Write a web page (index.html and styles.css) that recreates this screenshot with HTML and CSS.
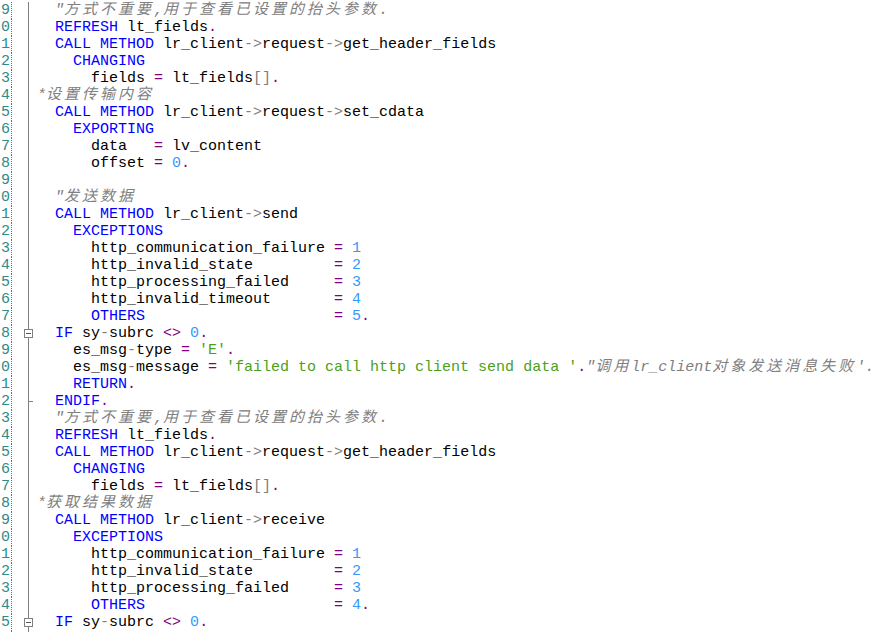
FILE: index.html
```html
<!DOCTYPE html>
<html>
<head>
<meta charset="utf-8">
<link rel="stylesheet" href="styles.css">
</head>
<body>
<div class="editor">
<div class="ln"><div class="no">9</div><div class="gut"></div><div class="code">  <span class="c">"<span class="z">方式不重要</span>,<span class="z">用于查看已设置的抬头参数</span>.</span></div></div>
<div class="ln"><div class="no">0</div><div class="gut"></div><div class="code">  <span class="k">REFRESH</span> lt_fields<span class="o">.</span></div></div>
<div class="ln"><div class="no">1</div><div class="gut"></div><div class="code">  <span class="k">CALL METHOD</span> lr_client<span class="g">-&gt;</span>request<span class="g">-&gt;</span>get_header_fields</div></div>
<div class="ln"><div class="no">2</div><div class="gut"></div><div class="code">    <span class="k">CHANGING</span></div></div>
<div class="ln"><div class="no">3</div><div class="gut"></div><div class="code">      fields <span class="o">=</span> lt_fields<span class="g">[]</span><span class="o">.</span></div></div>
<div class="ln"><div class="no">4</div><div class="gut"></div><div class="code"><span class="c">*<span class="z">设置传输内容</span></span></div></div>
<div class="ln"><div class="no">5</div><div class="gut"></div><div class="code">  <span class="k">CALL METHOD</span> lr_client<span class="g">-&gt;</span>request<span class="g">-&gt;</span>set_cdata</div></div>
<div class="ln"><div class="no">6</div><div class="gut"></div><div class="code">    <span class="k">EXPORTING</span></div></div>
<div class="ln"><div class="no">7</div><div class="gut"></div><div class="code">      data   <span class="o">=</span> lv_content</div></div>
<div class="ln"><div class="no">8</div><div class="gut"></div><div class="code">      offset <span class="o">=</span> <span class="n">0</span><span class="o">.</span></div></div>
<div class="ln"><div class="no">9</div><div class="gut"></div><div class="code"> </div></div>
<div class="ln"><div class="no">0</div><div class="gut"></div><div class="code">  <span class="c">"<span class="z">发送数据</span></span></div></div>
<div class="ln"><div class="no">1</div><div class="gut"></div><div class="code">  <span class="k">CALL METHOD</span> lr_client<span class="g">-&gt;</span>send</div></div>
<div class="ln"><div class="no">2</div><div class="gut"></div><div class="code">    <span class="k">EXCEPTIONS</span></div></div>
<div class="ln"><div class="no">3</div><div class="gut"></div><div class="code">      http_communication_failure <span class="o">=</span> <span class="n">1</span></div></div>
<div class="ln"><div class="no">4</div><div class="gut"></div><div class="code">      http_invalid_state         <span class="o">=</span> <span class="n">2</span></div></div>
<div class="ln"><div class="no">5</div><div class="gut"></div><div class="code">      http_processing_failed     <span class="o">=</span> <span class="n">3</span></div></div>
<div class="ln"><div class="no">6</div><div class="gut"></div><div class="code">      http_invalid_timeout       <span class="o">=</span> <span class="n">4</span></div></div>
<div class="ln"><div class="no">7</div><div class="gut"></div><div class="code">      <span class="k">OTHERS</span>                     <span class="o">=</span> <span class="n">5</span><span class="o">.</span></div></div>
<div class="ln"><div class="no">8</div><div class="gut"><span class="fold"></span></div><div class="code">  <span class="k">IF</span> sy<span class="g">-</span>subrc <span class="o">&lt;&gt;</span> <span class="n">0</span><span class="o">.</span></div></div>
<div class="ln"><div class="no">9</div><div class="gut"></div><div class="code">    es_msg<span class="g">-</span>type <span class="o">=</span> <span class="s">'E'</span><span class="o">.</span></div></div>
<div class="ln"><div class="no">0</div><div class="gut"></div><div class="code">    es_msg<span class="g">-</span>message <span class="o">=</span> <span class="s">'failed to call http client send data '</span><span class="o">.</span><span class="c">"<span class="z">调用</span>lr_client<span class="z">对象发送消息失败</span>'.</span></div></div>
<div class="ln"><div class="no">1</div><div class="gut"></div><div class="code">    <span class="k">RETURN</span><span class="o">.</span></div></div>
<div class="ln"><div class="no">2</div><div class="gut"><span class="fold-end"></span></div><div class="code">  <span class="k">ENDIF</span><span class="o">.</span></div></div>
<div class="ln"><div class="no">3</div><div class="gut"></div><div class="code">  <span class="c">"<span class="z">方式不重要</span>,<span class="z">用于查看已设置的抬头参数</span>.</span></div></div>
<div class="ln"><div class="no">4</div><div class="gut"></div><div class="code">  <span class="k">REFRESH</span> lt_fields<span class="o">.</span></div></div>
<div class="ln"><div class="no">5</div><div class="gut"></div><div class="code">  <span class="k">CALL METHOD</span> lr_client<span class="g">-&gt;</span>request<span class="g">-&gt;</span>get_header_fields</div></div>
<div class="ln"><div class="no">6</div><div class="gut"></div><div class="code">    <span class="k">CHANGING</span></div></div>
<div class="ln"><div class="no">7</div><div class="gut"></div><div class="code">      fields <span class="o">=</span> lt_fields<span class="g">[]</span><span class="o">.</span></div></div>
<div class="ln"><div class="no">8</div><div class="gut"></div><div class="code"><span class="c">*<span class="z">获取结果数据</span></span></div></div>
<div class="ln"><div class="no">9</div><div class="gut"></div><div class="code">  <span class="k">CALL METHOD</span> lr_client<span class="g">-&gt;</span>receive</div></div>
<div class="ln"><div class="no">0</div><div class="gut"></div><div class="code">    <span class="k">EXCEPTIONS</span></div></div>
<div class="ln"><div class="no">1</div><div class="gut"></div><div class="code">      http_communication_failure <span class="o">=</span> <span class="n">1</span></div></div>
<div class="ln"><div class="no">2</div><div class="gut"></div><div class="code">      http_invalid_state         <span class="o">=</span> <span class="n">2</span></div></div>
<div class="ln"><div class="no">3</div><div class="gut"></div><div class="code">      http_processing_failed     <span class="o">=</span> <span class="n">3</span></div></div>
<div class="ln"><div class="no">4</div><div class="gut"></div><div class="code">      <span class="k">OTHERS</span>                     <span class="o">=</span> <span class="n">4</span><span class="o">.</span></div></div>
<div class="ln"><div class="no">5</div><div class="gut"><span class="fold"></span></div><div class="code">  <span class="k">IF</span> sy<span class="g">-</span>subrc <span class="o">&lt;&gt;</span> <span class="n">0</span><span class="o">.</span></div></div>
<div class="ln"><div class="no">6</div><div class="gut"></div><div class="code">    es_msg<span class="g">-</span>type <span class="o">=</span> <span class="s">'E'</span><span class="o">.</span></div></div>
</div>
</body>
</html>
```

FILE: styles.css
```css
html, body {
  margin: 0;
  padding: 0;
  background: #ffffff;
  overflow: hidden;
}

.editor {
  width: 880px;
  height: 632px;
  box-sizing: border-box;
  padding-top: 2px;
  overflow: hidden;
  font-family: "Liberation Mono", "Noto Sans CJK SC", monospace;
  font-size: 15px;
  color: #000000;
}

.ln {
  display: flex;
  height: 17px;
  line-height: 17px;
}

.no {
  width: 10px;
  padding-right: 1px;
  flex: none;
  text-align: right;
  color: #2e8b87;
  white-space: nowrap;
}

.gut {
  position: relative;
  width: 25px;
  flex: none;
  border-left: 1px dotted #2e8b87;
  background: linear-gradient(#7f7f7f, #7f7f7f) no-repeat 16px 0 / 1px 100%;
}

.fold {
  position: absolute;
  left: 12px;
  top: 4px;
  width: 7px;
  height: 7px;
  border: 1px solid #7f7f7f;
  background: #ffffff;
}

.fold::after {
  content: "";
  position: absolute;
  left: 1px;
  top: 3px;
  width: 5px;
  height: 1px;
  background: #555555;
}

.fold-end {
  position: absolute;
  left: 17px;
  top: 8px;
  width: 4px;
  height: 1px;
  background: #7f7f7f;
}

.code {
  white-space: pre;
  flex: none;
}

.k { color: #0000ff; }
.o { color: #800080; }
.n { color: #3399ff; }
.s { color: #4aa01c; }
.g { color: #808080; }
.c { color: #808080; font-style: italic; }
.z { letter-spacing: 3px; }
```
